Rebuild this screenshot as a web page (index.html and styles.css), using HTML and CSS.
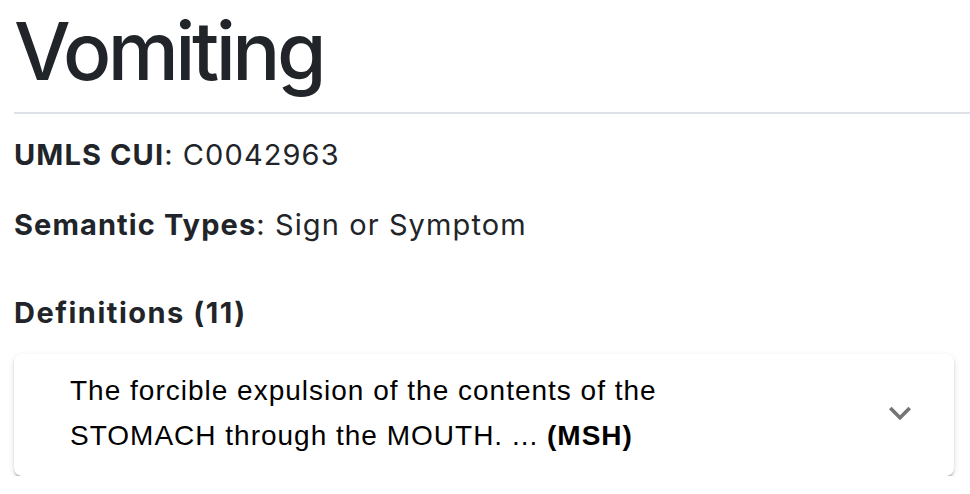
FILE: index.html
```html
<!DOCTYPE html>
<html lang="en">
<head>
<meta charset="utf-8">
<title>Vomiting</title>
<link rel="stylesheet" href="styles.css">
</head>
<body>
<div class="page">
  <header class="title-bar">
    <h1 class="title">Vomiting</h1>
  </header>
  <p class="field"><strong>UMLS CUI</strong>: C0042963</p>
  <p class="field"><strong>Semantic Types</strong>: Sign or Symptom</p>
  <h2 class="section">Definitions (11)</h2>
  <div class="card">
    <div class="card-text">The forcible expulsion of the contents of the STOMACH through the MOUTH. ... <b>(MSH)</b></div>
    <svg class="chevron" viewBox="0 0 24 24" width="44" height="44" aria-hidden="true"><path d="M16.59 8.59L12 13.17 7.41 8.59 6 10l6 6 6-6z" fill="currentColor"/></svg>
  </div>
</div>
</body>
</html>
```

FILE: styles.css
```css
html, body {
  margin: 0;
  padding: 0;
  background: #fff;
}
.page {
  padding: 0 16px 0 14px;
  font-family: Inter, "Noto Sans", sans-serif;
  color: #212529;
}
.title-bar {
  border-bottom: 2px solid #dee2e6;
  padding: 3px 0 13px;
  margin-right: -16px;
}
.title {
  margin: 0;
  font-size: 80px;
  font-weight: 500;
  line-height: 96px;
  letter-spacing: -3.5px;
}
.field {
  margin: 20px 0 28px;
  font-size: 29px;
  line-height: 42px;
  letter-spacing: 1.1px;
}
.field + .field {
  margin-top: 0;
}
.field strong {
  font-weight: 700;
}
.section {
  margin: 0 0 20px;
  padding-top: 18px;
  font-size: 29px;
  font-weight: 700;
  line-height: 42px;
  letter-spacing: 1.5px;
}
.card {
  display: flex;
  align-items: center;
  justify-content: space-between;
  background: #fff;
  border-radius: 8px;
  box-shadow: 0 4px 2px -2px rgba(0,0,0,0.2), 0 2px 2px 0 rgba(0,0,0,0.14), 0 2px 6px 0 rgba(0,0,0,0.12);
  padding: 14px 32px 18px 56px;
}
.card-text {
  max-width: 640px;
  font-family: "Liberation Sans", Arial, sans-serif;
  font-size: 28px;
  line-height: 45px;
  letter-spacing: 1px;
  color: #000;
}
.card-text b {
  font-weight: 700;
}
.chevron {
  color: #757575;
  flex: none;
}
```
